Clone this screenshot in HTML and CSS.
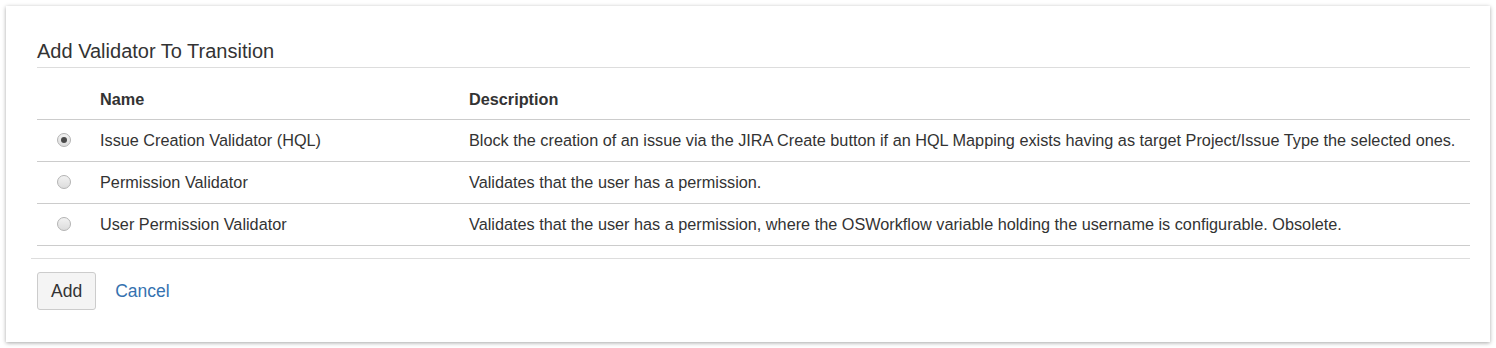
FILE: index.html
```html
<!DOCTYPE html>
<html lang="en">
<head>
  <meta charset="UTF-8">
  <title>Add Validator To Transition</title>
  <link rel="stylesheet" href="styles.css">
</head>
<body>
  <div class="page">
    <form class="dialog">
      <h2 class="dialog-title">Add Validator To Transition</h2>
      <table class="validators">
        <thead>
          <tr>
            <th class="col-radio"></th>
            <th class="col-name">Name</th>
            <th>Description</th>
          </tr>
        </thead>
        <tbody>
          <tr>
            <td class="col-radio"><input type="radio" name="validator" checked></td>
            <td>Issue Creation Validator (HQL)</td>
            <td>Block the creation of an issue via the JIRA Create button if an HQL Mapping exists having as target Project/Issue Type the selected ones.</td>
          </tr>
          <tr>
            <td class="col-radio"><input type="radio" name="validator"></td>
            <td>Permission Validator</td>
            <td>Validates that the user has a permission.</td>
          </tr>
          <tr>
            <td class="col-radio"><input type="radio" name="validator"></td>
            <td>User Permission Validator</td>
            <td>Validates that the user has a permission, where the OSWorkflow variable holding the username is configurable. Obsolete.</td>
          </tr>
        </tbody>
      </table>
      <div class="buttons">
        <button type="submit" class="btn">Add</button>
        <a href="#" class="cancel">Cancel</a>
      </div>
    </form>
  </div>
</body>
</html>
```

FILE: styles.css
```css
body {
  font-family: "Liberation Sans", Arial, sans-serif;
  font-size: 16.25px;
  color: #333;
  margin: 0;
  padding: 0;
  background-color: #fff;
}

.page {
  padding: 6px;
}

.dialog {
  height: 336px;
  box-sizing: border-box;
  padding: 33px 20px 0 25px;
  background-color: #fff;
  box-shadow: 0 1px 4px rgba(0, 0, 0, 0.35);
}

.dialog-title {
  margin: 0 0 0 6px;
  padding-bottom: 4px;
  font-size: 20px;
  font-weight: normal;
  line-height: 24px;
  color: #333;
  border-bottom: 1px solid #ddd;
}

.validators {
  width: calc(100% - 6px);
  margin: 10px 0 0 6px;
  border-collapse: collapse;
}

.validators th {
  text-align: left;
  font-weight: bold;
  line-height: 20px;
  padding: 11px 10px 10px;
  border-bottom: 1px solid #ccc;
}

.validators td {
  line-height: 20px;
  padding: 10px 10px 11px;
  border-bottom: 1px solid #ccc;
  vertical-align: top;
}

.validators .col-radio {
  width: 53px;
  text-align: center;
  padding-left: 0;
  padding-right: 0;
}

.validators .col-name {
  width: 349px;
}

.validators input[type="radio"] {
  appearance: none;
  -webkit-appearance: none;
  width: 14px;
  height: 14px;
  margin: 3px 0 0;
  border: 1px solid #b4b4b4;
  border-radius: 50%;
  background: linear-gradient(#f2f2f2, #dcdcdc);
  box-sizing: border-box;
  vertical-align: top;
  position: relative;
}

.validators input[type="radio"]:checked::after {
  content: "";
  position: absolute;
  left: 3px;
  top: 3px;
  width: 6px;
  height: 6px;
  border-radius: 50%;
  background-color: #4a4a4a;
}

.buttons {
  margin-top: 12px;
  padding: 13px 0 0 6px;
  border-top: 1px solid #ddd;
  display: flex;
  align-items: center;
  gap: 19px;
}

.btn {
  height: 38px;
  padding: 0 13px;
  font-family: inherit;
  font-size: 17.5px;
  color: #333;
  background-color: #f4f4f4;
  border: 1px solid #ccc;
  border-radius: 3px;
  cursor: pointer;
}

.cancel {
  font-size: 17.5px;
  color: #3572b0;
  text-decoration: none;
}
```
